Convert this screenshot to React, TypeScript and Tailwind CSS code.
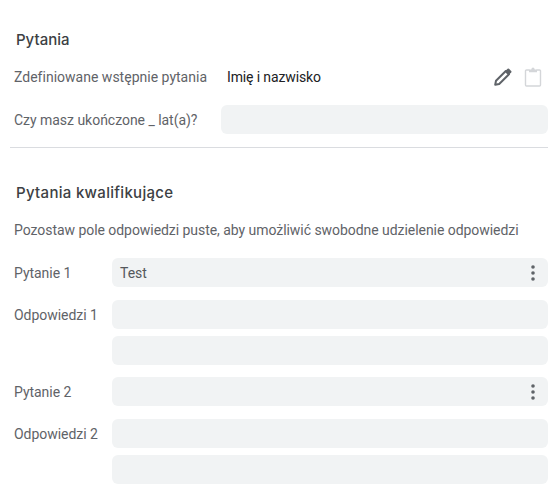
const Field = ({ children, dots }: { children?: string; dots?: boolean }) => (
  <div className="flex h-[29px] flex-1 items-center justify-between rounded-[6px] bg-[#f1f3f4] pl-2 pr-[13px] text-[14px] tracking-[-0.05px] text-[#54585c]">
    <span>{children}</span>
    {dots && (
      <svg width="4" height="16" viewBox="0 0 4 16" fill="#5f6368">
        <circle cx="2" cy="2" r="1.8" />
        <circle cx="2" cy="8" r="1.8" />
        <circle cx="2" cy="14" r="1.8" />
      </svg>
    )}
  </div>
);

const Row = ({ label, mt, children }: { label?: string; mt: string; children: React.ReactNode }) => (
  <div className={`flex items-center ${mt}`}>
    <div className="w-[98px] text-[14px] tracking-[-0.04px] text-[#5f6368]">{label}</div>
    {children}
  </div>
);

export default function App() {
  return (
    <div className="h-[496px] w-[560px] overflow-hidden bg-white pl-[14px] pr-3 pt-[30px] font-['Roboto',sans-serif] text-[14px] leading-[20px]">
      <h2 className="ml-[2px] font-['Inter',sans-serif] text-[15px] font-medium leading-[20px] text-[#3c4043]">Pytania</h2>
      <div className="mt-[12px] flex h-[29px] items-center">
        <div className="w-[213px] tracking-[0.01px] text-[#5f6368]">Zdefiniowane wstępnie pytania</div>
        <div className="flex-1 tracking-[-0.13px] text-[#202124]">Imię i nazwisko</div>
        <div className="mr-[6px] flex items-center gap-[11px]">
          <svg width="20" height="20" viewBox="0 0 20 20" fill="none">
            <path d="M2.2 17.8 L3 13.8 L12.8 4 L16 7.2 L6.2 17 Z" stroke="#5f6368" strokeWidth="2" strokeLinejoin="round" />
            <path d="M11.8 4.6 L14.6 1.8 Q15.3 1.2 16 1.8 L18.2 4 Q18.8 4.7 18.2 5.4 L15.4 8.2 Z" fill="#5f6368" />
          </svg>
          <svg width="18" height="20" viewBox="0 0 18 20" fill="none">
            <path d="M5.5 3 H2.5 Q1.5 3 1.5 4 V18 Q1.5 19 2.5 19 H15.5 Q16.5 19 16.5 18 V4 Q16.5 3 15.5 3 H12.5" stroke="#d4d6d9" strokeWidth="1.4" />
            <path d="M5 5.2 V2.4 H7.2 Q7.7 0.6 9 0.6 Q10.3 0.6 10.8 2.4 H13 V5.2 Z" fill="#d4d6d9" />
          </svg>
        </div>
      </div>
      <div className="mt-[14px] flex items-center">
        <div className="w-[207px] tracking-[-0.03px] text-[#5f6368]">Czy masz ukończone _ lat(a)?</div>
        <Field />
      </div>
      <div className="mt-[13px] h-px w-[538px] -translate-x-1 bg-[#dadce0]" />
      <h2 className="ml-[2px] mt-[35px] font-['Inter',sans-serif] text-[15px] font-medium leading-[20px] tracking-[0.3px] text-[#3c4043]">Pytania kwalifikujące</h2>
      <p className="mt-[17px] tracking-[-0.05px] text-[#5f6368]">Pozostaw pole odpowiedzi puste, aby umożliwić swobodne udzielenie odpowiedzi</p>
      <Row label="Pytanie 1" mt="mt-[18px]"><Field dots>Test</Field></Row>
      <Row label="Odpowiedzi 1" mt="mt-[13px]"><Field /></Row>
      <Row mt="mt-[7px]"><Field /></Row>
      <Row label="Pytanie 2" mt="mt-[12px]"><Field dots /></Row>
      <Row label="Odpowiedzi 2" mt="mt-[13px]"><Field /></Row>
      <Row mt="mt-[7px]"><Field /></Row>
    </div>
  );
}
